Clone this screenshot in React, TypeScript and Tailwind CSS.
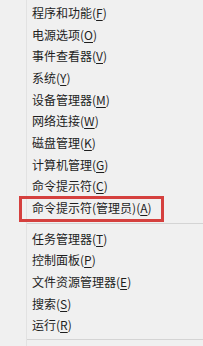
import React from 'react';

type Item = { label: string; key: string };

const groupOne: Item[] = [
	{ label: '程序和功能', key: 'F' },
	{ label: '电源选项', key: 'O' },
	{ label: '事件查看器', key: 'V' },
	{ label: '系统', key: 'Y' },
	{ label: '设备管理器', key: 'M' },
	{ label: '网络连接', key: 'W' },
	{ label: '磁盘管理', key: 'K' },
	{ label: '计算机管理', key: 'G' },
	{ label: '命令提示符', key: 'C' },
	{ label: '命令提示符(管理员)', key: 'A' },
];

const groupTwo: Item[] = [
	{ label: '任务管理器', key: 'T' },
	{ label: '控制面板', key: 'P' },
	{ label: '文件资源管理器', key: 'E' },
	{ label: '搜索', key: 'S' },
	{ label: '运行', key: 'R' },
];

const MenuRow = ({ item, marked }: { item: Item; marked?: boolean }) => (
	<div className="relative flex h-[21.7px] items-center pl-[32px] text-[12px] leading-none text-[#1e1e1e]">
		<span>
			{item.label}(<u className="underline-offset-2">{item.key}</u>)
		</span>
		{marked && (
			<div className="pointer-events-none absolute left-[19px] top-[-1px] h-[26px] w-[145px] border-[3px] border-[#d5403e]" />
		)}
	</div>
);

export default function App() {
	return (
		<div
			className="relative h-[346px] w-[203px] overflow-hidden bg-[#f0f0f0]"
			style={{ fontFamily: '"Noto Sans CJK SC", "Microsoft YaHei", sans-serif' }}
		>
			<div className="absolute bottom-0 left-[26px] top-0 w-px bg-[#e2e2e2]" />
			<div className="flex flex-col pt-[2px]">
				{groupOne.map((item) => (
					<MenuRow key={item.key} item={item} marked={item.key === 'A'} />
				))}
				<div className="ml-[27px] mb-[4px] mt-[4px] h-px bg-[#d4d4d4]" />
				{groupTwo.map((item) => (
					<MenuRow key={item.key} item={item} />
				))}
				<div className="ml-[27px] mt-[3px] h-px bg-[#d4d4d4]" />
			</div>
		</div>
	);
}
